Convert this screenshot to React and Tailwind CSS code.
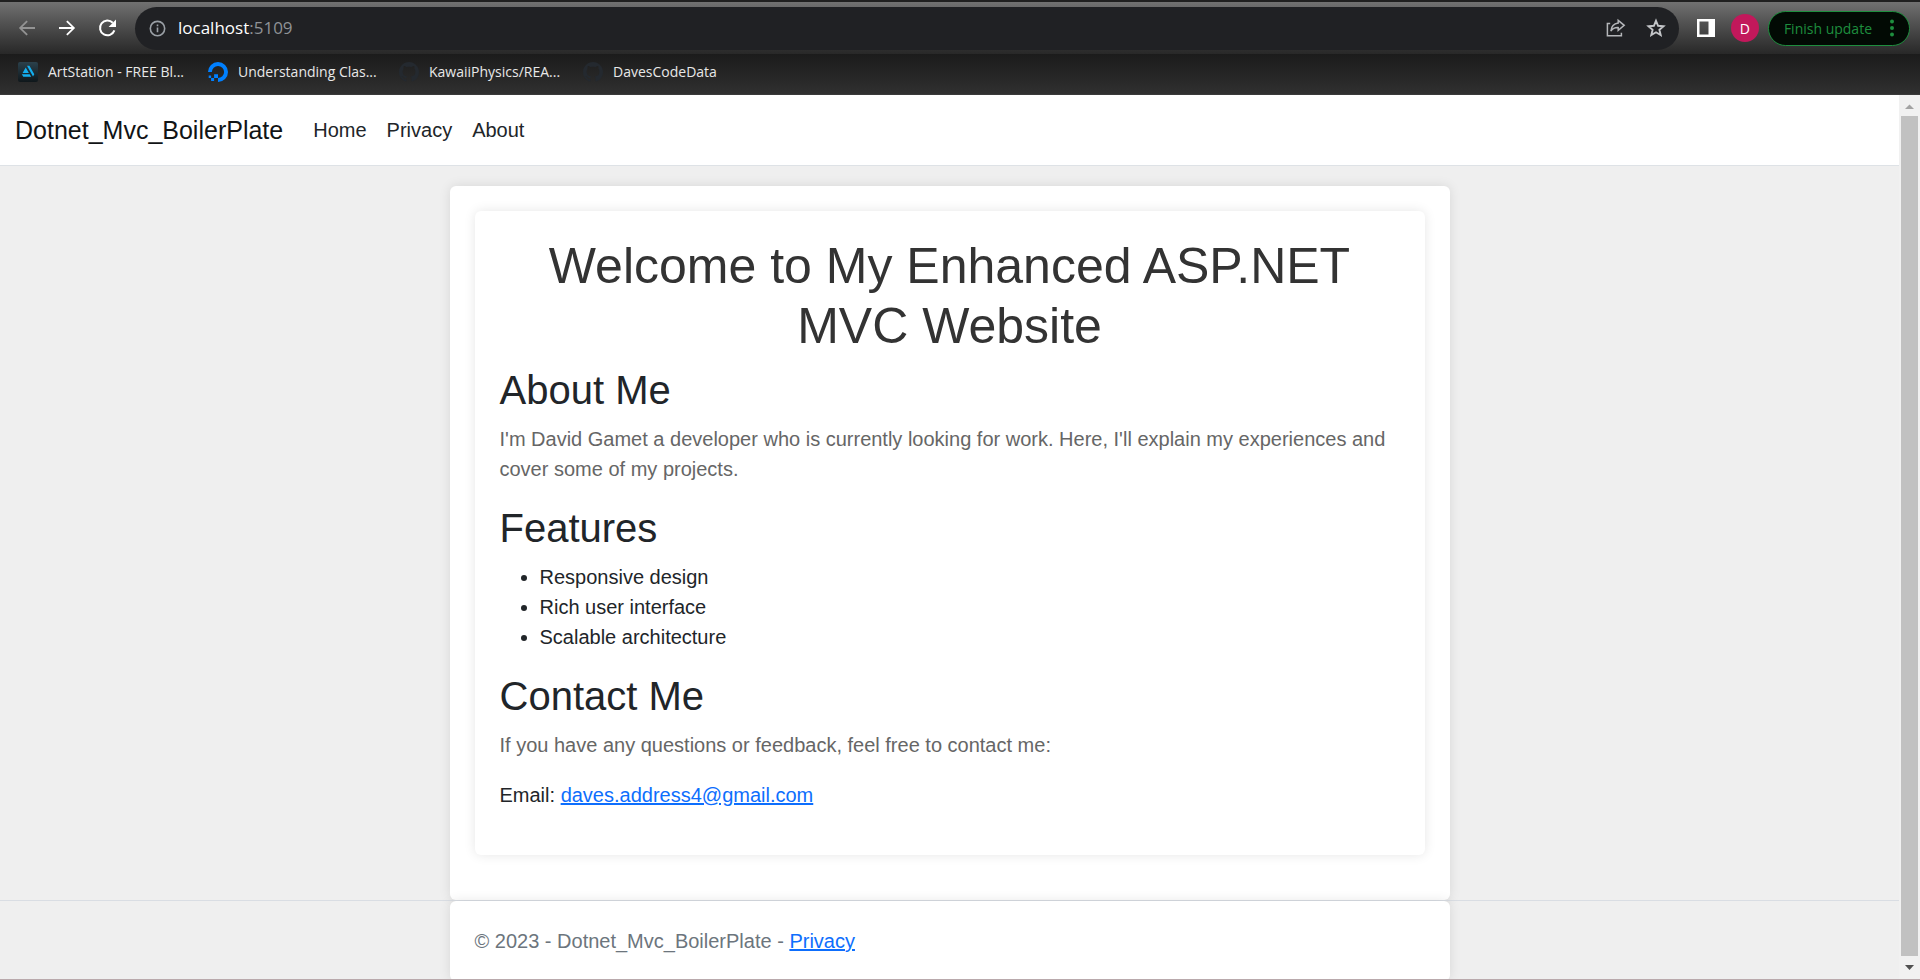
import React from "react";

const bookmarks = [
  { label: "ArtStation - FREE Bl...", icon: "art", width: "w-[172px]" },
  { label: "Understanding Clas...", icon: "ocean", width: "w-[173px]" },
  { label: "KawaiiPhysics/REA...", icon: "hub", width: "w-[166px]" },
  { label: "DavesCodeData", icon: "hub", width: "w-[140px]" },
];

function BookmarkIcon({ kind }) {
  if (kind === "art") {
    return (
      <svg viewBox="0 0 20 20" className="size-5 shrink-0" aria-hidden="true">
        <defs>
          <linearGradient id="artbg" x1="0" y1="0" x2="0" y2="1">
            <stop offset="0" stopColor="#2b414c" />
            <stop offset="1" stopColor="#0f171b" />
          </linearGradient>
        </defs>
        <rect width="20" height="20" rx="2" fill="url(#artbg)" />
        <path d="M7.7 5.4 L10.9 10.9 H4.6 Z M3.8 12.3 H11.7 L13.2 14.8 H5.3 Z M9 3.8 H11.4 L16.3 12.3 L15 14.6 Z" fill="#13aff0" />
      </svg>
    );
  }
  if (kind === "ocean") {
    return (
      <svg viewBox="0 0 20 20" className="size-5 shrink-0" fill="#0080ff" aria-hidden="true">
        <path d="M10 20 V16.1 A6.1 6.1 0 1 0 3.9 10 H0 A10 10 0 1 1 10 20 Z" />
        <path d="M6.1 12.2 H10 V16.1 H6.1 Z M3.1 16.1 H6.1 V19.1 H3.1 Z M0.7 13.6 H3.1 V16.1 H0.7 Z" />
      </svg>
    );
  }
  return (
    <svg viewBox="0 0 16 16" className="size-5 shrink-0" fill="#24292f" aria-hidden="true">
      <path d="M8 0C3.58 0 0 3.58 0 8c0 3.54 2.29 6.53 5.47 7.59.4.07.55-.17.55-.38 0-.19-.01-.82-.01-1.49-2.01.37-2.53-.49-2.69-.94-.09-.23-.48-.94-.82-1.13-.28-.15-.68-.52-.01-.53.63-.01 1.08.58 1.23.82.72 1.21 1.87.87 2.33.66.07-.52.28-.87.51-1.07-1.78-.2-3.64-.89-3.64-3.95 0-.87.31-1.59.82-2.15-.08-.2-.36-1.02.08-2.12 0 0 .67-.21 2.2.82.64-.18 1.32-.27 2-.27s1.36.09 2 .27c1.53-1.04 2.2-.82 2.2-.82.44 1.1.16 1.92.08 2.12.51.56.82 1.27.82 2.15 0 3.07-1.87 3.75-3.65 3.95.29.25.54.73.54 1.48 0 1.07-.01 1.93-.01 2.2 0 .21.15.46.55.38A8.01 8.01 0 0 0 16 8c0-4.42-3.58-8-8-8Z" />
    </svg>
  );
}

function Toolbar() {
  return (
    <div className="flex h-[54px] items-center border-t-2 border-[#202020] bg-linear-to-b from-[#717171] to-[#282828] pr-[10px] pl-[15px]">
      <button aria-label="Back" className="flex w-10 shrink-0 text-[#939393]">
        <svg viewBox="0 0 24 24" className="size-6" fill="currentColor"><path d="M20 11.1H7.4l5.4-5.4L11.5 4.400 3.900 12l7.600 7.600 1.300-1.300-5.400-5.400H20z" /></svg>
      </button>
      <button aria-label="Forward" className="flex w-10 shrink-0 text-white">
        <svg viewBox="0 0 24 24" className="size-6" fill="currentColor"><path d="M4 11.1h12.6l-5.400-5.400 1.300-1.300 7.600 7.600-7.600 7.600-1.300-1.300 5.400-5.400H4z" /></svg>
      </button>
      <button aria-label="Reload" className="flex w-10 shrink-0 text-white">
        <svg viewBox="0 0 24 24" className="size-6" fill="none" stroke="currentColor" strokeWidth="2"><path d="M19.4 14.4A7.4 7.4 0 1 1 17.8 6.8" /><path d="M21 3.6V11h-7.4z" fill="currentColor" stroke="none" /></svg>
      </button>
      <div className="flex h-[43px] min-w-0 flex-1 items-center rounded-full bg-[#202124] pr-[13px] pl-[14px]">
        <svg viewBox="0 0 18 18" className="size-[17px] shrink-0" fill="none" stroke="#9aa0a6" strokeWidth="1.7" aria-hidden="true"><circle cx="9" cy="9" r="7.6" /><path d="M9 8v5M9 4.8v1.8" /></svg>
        <div className="ml-3 flex-1 text-[17px] leading-6 text-[#8f9296]"><span className="text-white">localhost</span>:5109</div>
        <button aria-label="Share" className="mr-[20px] text-[#b4b6b9]">
          <svg viewBox="0 0 20 20" className="size-5" fill="none" stroke="currentColor" strokeWidth="1.5"><path d="M4.2 5.6H1.4v12.1h14v-3" /><path d="M12.2 2.3l6 5-6 5V9.6c-3.5-.2-5.6.9-7.3 3.4.4-4.3 2.8-7.2 7.3-7.9z" /></svg>
        </button>
        <button aria-label="Bookmark this tab" className="text-[#c3c5c8]">
          <svg viewBox="0 0 20 20" className="size-5" fill="none" stroke="currentColor" strokeWidth="1.9"><path d="M10 2.8l2.1 5 5.4.5-4.1 3.5 1.3 5.3-4.7-2.8-4.7 2.8 1.3-5.3-4.1-3.5 5.4-.5z" /></svg>
        </button>
      </div>
      <button aria-label="Side panel" className="ml-[18px]">
        <svg viewBox="0 0 18 18" className="size-[18px]"><path fill="#fff" fillRule="evenodd" d="M0 0h18v18H0zM2.5 2.5v13h9v-13z" /></svg>
      </button>
      <button aria-label="Profile" className="ml-4 flex size-7 items-center justify-center rounded-full bg-[#c2185b] text-[14px] text-white">D</button>
      <button className="ml-[9px] flex h-[35px] shrink-0 items-center rounded-full border border-[#1e8e3e] bg-[#020a04] pr-[15px] pl-[15px] text-[14px] text-[#1e8e3e]">
        Finish update
        <svg viewBox="0 0 4 18" className="ml-[18px] h-[18px] w-1" fill="currentColor" aria-hidden="true"><circle cx="2" cy="2.5" r="2" /><circle cx="2" cy="9" r="2" /><circle cx="2" cy="15.5" r="2" /></svg>
      </button>
    </div>
  );
}

function Bookmarks() {
  return (
    <nav aria-label="Bookmarks" className="flex h-[41px] items-center gap-[18px] border-b border-[#3a3a3a] bg-linear-to-b from-[#1b1b1b] to-[#303030] pb-1 pl-[18px]">
      {bookmarks.map((b) => (
        <a key={b.label} href="#" className={`flex items-center gap-[10px] text-[14px] leading-5 whitespace-nowrap text-[#e8e8e8] ${b.width}`}>
          <BookmarkIcon kind={b.icon} />
          {b.label}
        </a>
      ))}
    </nav>
  );
}

function Scrollbar() {
  return (
    <div className="flex w-[21px] shrink-0 flex-col items-center bg-[#f1f1f1]" aria-hidden="true">
      <svg viewBox="0 0 21 21" className="h-[21px] w-[21px]"><path d="M6 14 10.5 9.5 15 14z" fill="#a3a3a3" /></svg>
      <div className="w-[17px] flex-1 bg-[#c1c1c1]" />
      <svg viewBox="0 0 21 23" className="h-[23px] w-[21px]"><path d="M6 9h9l-4.5 5z" fill="#505050" /></svg>
    </div>
  );
}

function Section({ title, children }) {
  return (
    <section>
      <h2 className="mb-[10px] text-[40px] leading-[48px]">{title}</h2>
      {children}
    </section>
  );
}

export default function App() {
  return (
    <div className="flex h-screen flex-col overflow-hidden border-b border-[#b9a9ac]">
      <header className="shrink-0 font-['Open_Sans','Noto_Sans',sans-serif]">
        <Toolbar />
        <Bookmarks />
      </header>
      <div className="flex min-h-0 flex-1 font-['Liberation_Sans',Arial,sans-serif] text-[20px] leading-[30px] text-[#212529]">
        <div className="min-w-0 flex-1 overflow-hidden bg-[#efefef]">
          <nav className="mb-5 flex h-[71px] items-center border-b border-[#dee2e6] bg-white px-[15px]">
            <a href="#" className="mr-5 text-[25px] text-[#111416]">Dotnet_Mvc_BoilerPlate</a>
            <a href="#" className="px-[10px]">Home</a>
            <a href="#" className="px-[10px]">Privacy</a>
            <a href="#" className="px-[10px]">About</a>
          </nav>
          <main className="mx-auto max-w-[1000px] rounded-md bg-white p-[25px] shadow-[0_0_12px_rgba(0,0,0,0.1)]">
            <div className="mb-5 rounded-md bg-white p-[25px] shadow-[0_0_12px_rgba(0,0,0,0.1)]">
              <h1 className="mb-[10px] text-center text-[50px] leading-[60px] text-[#333]">Welcome to My Enhanced ASP.NET MVC Website</h1>
              <Section title="About Me">
                <p className="mb-5 text-[#666]">I'm David Gamet a developer who is currently looking for work. Here, I'll explain my experiences and cover some of my projects.</p>
              </Section>
              <Section title="Features">
                <ul className="mb-5 list-disc pl-10">
                  <li>Responsive design</li>
                  <li>Rich user interface</li>
                  <li>Scalable architecture</li>
                </ul>
              </Section>
              <Section title="Contact Me">
                <p className="mb-5 text-[#666]">If you have any questions or feedback, feel free to contact me:</p>
                <p className="mb-5">Email: <a href="mailto:daves.address4@gmail.com" className="text-[#0d6efd] underline">daves.address4@gmail.com</a></p>
              </Section>
            </div>
          </main>
          <footer className="border-t border-[#d9dde3] text-[#6c757d]">
            <div className="mx-auto max-w-[1000px] rounded-md bg-white p-[25px] shadow-[0_0_12px_rgba(0,0,0,0.1)]">
              © 2023 - Dotnet_Mvc_BoilerPlate - <a href="#" className="text-[#0d6efd] underline">Privacy</a>
            </div>
          </footer>
        </div>
        <Scrollbar />
      </div>
    </div>
  );
}
